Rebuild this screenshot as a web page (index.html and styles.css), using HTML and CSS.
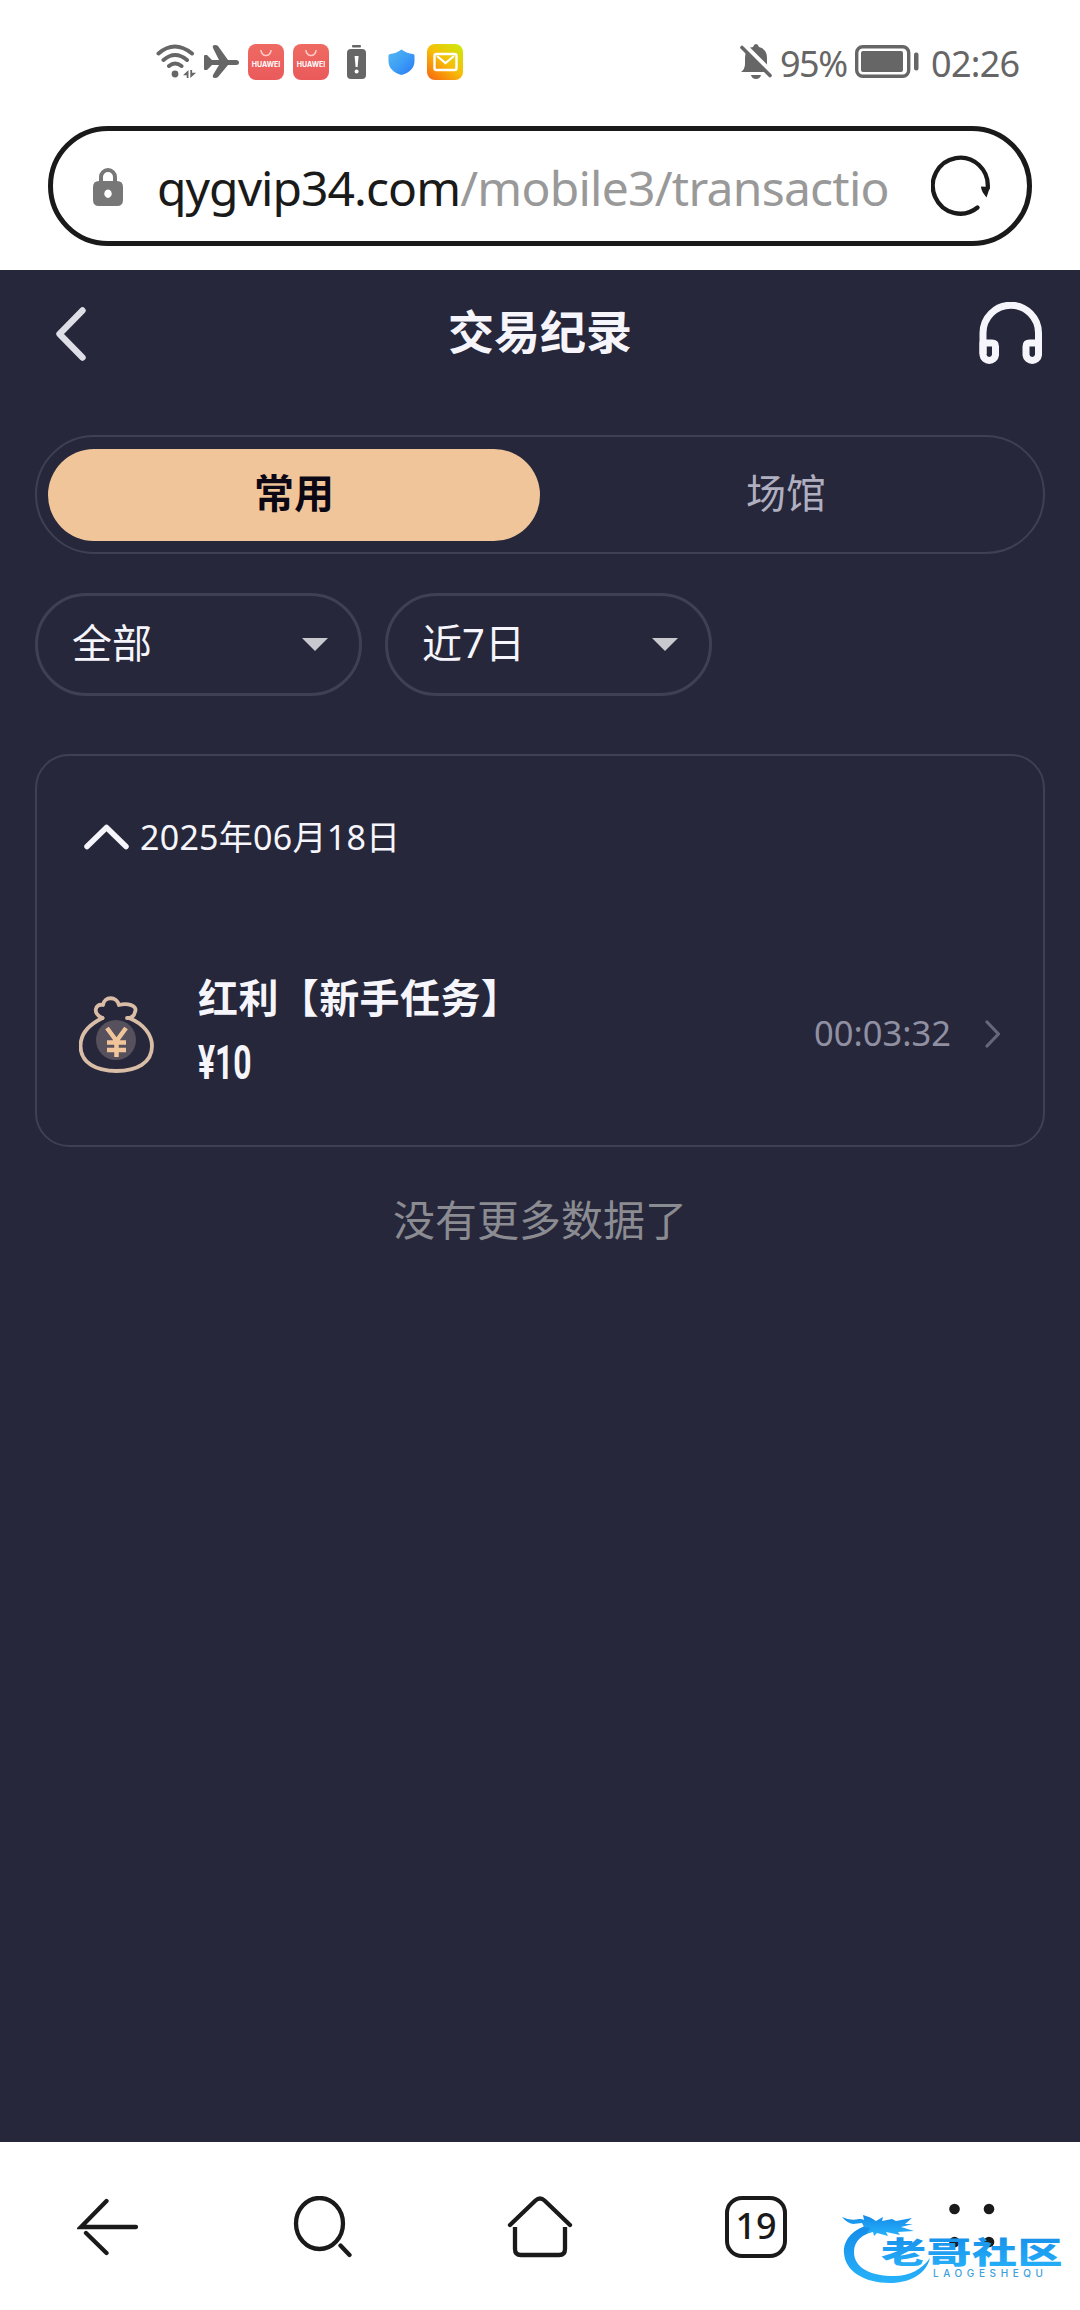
FILE: index.html
```html
<!DOCTYPE html>
<html lang="zh-CN">
<head>
<meta charset="utf-8">
<title>交易纪录</title>
<link rel="stylesheet" href="styles.css">
</head>
<body>
<div class="status">
  <div class="status-left">
    <svg class="wifi" width="41" height="36" viewBox="0 0 41 36" fill="none" stroke="#666" stroke-width="4" stroke-linecap="round"><path d="M2.500 9.500Q18.500 -4.500 36 9.500M7.500 16Q19 6 31 16M13 22Q19 17 25.500 22"/><circle cx="19" cy="30" r="3.400" fill="#666" stroke="none"/><path d="M32.500 26v8h-1.800v-2.800H27zM34.300 34v-8h1.800v2.800h4z" fill="#666" stroke="none"/></svg>
    <svg class="plane" width="35" height="36" viewBox="0 0 35 36" fill="#666"><path d="M1 11h2l5 5h7L9 4q-1-3 2-3 2 0 3 1l10 14h8q3 0 3 2.500T32 21h-8L14 33q-1 1-3 1-3 0-2-3l6-10H8l-5 5H1q-1 0-1-1V12q0-1 1-1z"/></svg>
    <div class="huawei"><svg width="12" height="7" viewBox="0 0 12 7" fill="none" stroke="#ffc9c5" stroke-width="1.500"><path d="M.8 0q1 5.500 5.200 5.500T11.200 0"/></svg><span>HUAWEI</span></div>
    <div class="huawei second"><svg width="12" height="7" viewBox="0 0 12 7" fill="none" stroke="#ffc9c5" stroke-width="1.500"><path d="M.8 0q1 5.500 5.200 5.500T11.200 0"/></svg><span>HUAWEI</span></div>
    <svg class="alert" width="19" height="36" viewBox="0 0 19 36"><rect x="5" y="1" width="9" height="2.600" rx="1" fill="#666"/><rect y="5" width="19" height="30" rx="4" fill="#666"/><path d="M7.600 12h4l-1 11H8.600z" fill="#fff"/><circle cx="9.600" cy="27.500" r="2" fill="#fff"/></svg>
    <svg class="shield" width="27" height="36" viewBox="0 0 27 36"><defs><linearGradient id="sh" x2="1" y2="1"><stop offset="0" stop-color="#55b7ee"/><stop offset=".5" stop-color="#3d9ef5"/><stop offset="1" stop-color="#2878f8"/></linearGradient></defs><path d="M13.500 5.500Q19 9.500 25 10q1.500 0 1.500 2v5q0 10-13 14Q.5 27 .5 17v-5q0-2 1.500-2 6-.5 11.500-4.500z" fill="url(#sh)"/></svg>
    <svg class="mail" width="36" height="36" viewBox="0 0 36 36"><defs><linearGradient id="ml" x1=".9" y1="0" x2=".1" y2="1"><stop offset="0" stop-color="#cee80c"/><stop offset=".5" stop-color="#f7bd08"/><stop offset="1" stop-color="#f76a10"/></linearGradient></defs><rect width="36" height="36" rx="8" fill="url(#ml)"/><rect x="7.500" y="10" width="22" height="16" rx="2" fill="none" stroke="#fff" stroke-width="2.400"/><path d="m10 12 8.500 7 8.500-7" fill="none" stroke="#fff" stroke-width="2.200"/></svg>
  </div>
  <div class="status-right">
    <svg class="bell" width="33" height="36" viewBox="0 0 33 36"><path d="M1 28q4-3 4-8v-6Q5 3 13 3q1-3 3-3t3 3q8 2 8 11v6q0 5 4 8z" fill="#666"/><path d="M11 31h10q-1 4-5 4t-5-4z" fill="#666"/><path d="m4 1 29 29" stroke="#fff" stroke-width="5"/><path d="m2 3.500 28 28" stroke="#666" stroke-width="3.600" stroke-linecap="round"/></svg>
    <span class="percent">95%</span>
    <svg class="battery" width="64" height="34" viewBox="0 0 64 34"><rect x="1.700" y="1.700" width="52" height="29.600" rx="6" fill="none" stroke="#666" stroke-width="3.400"/><rect x="6" y="6" width="42" height="21" rx="2" fill="#666"/><rect x="59" y="7.500" width="4.500" height="18" rx="2" fill="#666"/></svg>
    <span class="clock">02:26</span>
  </div>
</div>
<div class="address-wrap">
  <div class="address">
    <svg class="lock" width="30" height="39" viewBox="0 0 30 39"><path d="M8 17V10a7 7 0 0 1 14 0v7" fill="none" stroke="#777" stroke-width="4"/><path d="M6 14h18q6 0 6 6v13q0 6-6 6H6q-6 0-6-6V20q0-6 6-6zm9 8.500a3.700 4.200 0 1 0 .01 0z" fill="#777" fill-rule="evenodd"/></svg>
    <div class="url"><span class="host">qygvip34.com</span><span class="path">/mobile3/transactio</span></div>
    <svg class="reload" width="60" height="62" viewBox="0 0 60 62"><path d="M46.500 52.500A27.500 28 0 1 1 56.700 33" fill="none" stroke="#1a1a1a" stroke-width="4.300" stroke-linecap="round"/><path d="M50 31.500 59 32 55.500 42.500Q50 36 50 31.500z" fill="#1a1a1a"/></svg>
  </div>
</div>
<main>
  <header>
    <svg class="back" width="32" height="56" viewBox="0 0 32 56" fill="none" stroke="#dedfe6" stroke-width="6.400" stroke-linecap="round" stroke-linejoin="round"><path d="M27.500 4.500 4.500 28l23 23.500"/></svg>
    <h1>交易纪录</h1>
    <svg class="headset" width="64" height="64" viewBox="0 0 64 64" fill="none" stroke="#f5f5fb" stroke-width="7"><path d="M4 52V31a27.500 27.500 0 0 1 55.500 0v21"/><path d="M4 41h9q3.500 0 3.500 3.500V53A6.300 6.300 0 0 1 4 53zM59.500 41h-9q-3.500 0-3.500 3.500V53a6.300 6.300 0 0 0 12.500 0z" stroke-linejoin="round"/></svg>
  </header>
  <div class="tabs"><div class="tab active">常用</div><div class="tab">场馆</div></div>
  <div class="filters">
    <div class="filter"><span>全部</span><i></i></div>
    <div class="filter"><span>近7日</span><i></i></div>
  </div>
  <section class="card">
    <div class="date"><svg width="46" height="26" viewBox="0 0 46 26" fill="none" stroke="#f5f5fb" stroke-width="5.500" stroke-linecap="round" stroke-linejoin="round"><path d="M3 22.500 22.500 3.500l19.500 19"/></svg><span>2025年06月18日</span></div>
    <div class="record">
      <svg class="bag" width="76" height="78" viewBox="0 0 76 78"><circle cx="37" cy="44" r="20" fill="#57505d"/><g fill="none" stroke="#d9bda6" stroke-width="3.800" stroke-linejoin="round" stroke-linecap="round"><path d="M23.500 22C13 18 16 7 24 9c1-9 14-9 16 0 8-2 19 0 16 7-1 5-4 6-8 6"/><path d="M23.500 22C9 29 1.500 39 1.500 50c0 17 16 25 36 25S73 67 73 50c0-11-8-22-23-28"/></g><path d="m28 32 9.500 13L47 32M37.500 44v17M28 46.500h19M28 54h19" fill="none" stroke="#f1c59a" stroke-width="4.500"/></svg>
      <div class="detail"><div class="name">红利【新手任务】</div><div class="amount">¥10</div></div>
      <span class="time">00:03:32</span>
      <svg class="go" width="16" height="28" viewBox="0 0 16 28" fill="none" stroke="#66677b" stroke-width="3.200" stroke-linecap="round" stroke-linejoin="round"><path d="m2 2 11.500 12L2 26"/></svg>
    </div>
  </section>
  <p class="end">没有更多数据了</p>
</main>
<nav>
  <div><svg width="62" height="62" viewBox="0 0 62 62" fill="none" stroke="#1a1a1a" stroke-width="4.300" stroke-linecap="round"><path d="M29.500 5 4 31h55M29.500 57 9 37"/></svg></div>
  <div><svg width="62" height="62" viewBox="0 0 62 62" fill="none" stroke="#1a1a1a" stroke-width="4.300"><ellipse cx="26.500" cy="27.500" rx="23.500" ry="25.500"/><path d="m47.500 49.500 9 9.500" stroke-linecap="round"/></svg></div>
  <div><svg width="66" height="62" viewBox="0 0 66 62" fill="none" stroke="#1a1a1a" stroke-width="4.300" stroke-linecap="round"><path d="M3 29 28.500 4.500q4.500-4 9 0L63 29"/><path d="M8 31v22q0 6 6 6h38q6 0 6-6V31" stroke-linecap="butt"/></svg></div>
  <div><span class="count">19</span></div>
  <div><svg width="62" height="62" viewBox="0 0 62 62" fill="#1a1a1a"><circle cx="13.500" cy="13" r="5.300"/><circle cx="48" cy="13" r="5.300"/><circle cx="13.500" cy="46" r="5.300"/><circle cx="48" cy="46" r="5.300"/></svg></div>
  <svg class="brand" width="226" height="72" viewBox="0 0 226 72"><defs><linearGradient id="br" x2="0" y2="1"><stop offset="0" stop-color="#148ae8"/><stop offset="1" stop-color="#27b2fa"/></linearGradient></defs><g fill="url(#br)"><path d="M30 9C12 13 1 24 2 38c1 18 20 30 46 30 20 0 36-9 40-25-8 11-20 18-36 18-23 0-40-8-40-24C12 26 20 19 34 16z"/><path d="M0 2q8 4 17 2 3-.5 5 1l-1-5q8 2 13 6l7-4-1 4 10-2 4 2 16-3-7 6h8l-12 3 13 4-16 1 2 3-14-3 2 4-11-3-3 3-1-4-6 1 3-5-6-1-2-4-9 1Q5 8 0 2z"/><text class="brand-name" transform="translate(39 48) scale(1.5 1)" textLength="121" lengthAdjust="spacing">老哥社区</text></g><text class="brand-sub" x="91" y="62" textLength="110" lengthAdjust="spacing">LAOGESHEQU</text></svg>
</nav>
</body>
</html>
```
FILE: styles.css
```css
* { box-sizing: border-box; }
body { margin: 0; width: 1080px; height: 2310px; display: flex; flex-direction: column; background: #fff; font-family: "Noto Sans", "Noto Sans CJK SC", sans-serif; overflow: hidden; }
svg { display: block; flex: none; }

.status { height: 126px; padding: 44px 61px 0 156px; display: flex; justify-content: space-between; color: #666; }
.status-left, .status-right { display: flex; height: 36px; }
.plane { margin-left: 7px; }
.huawei { width: 36px; height: 36px; margin-left: 9px; padding-top: 6px; border-radius: 8px; background: linear-gradient(#ee6a62, #ea5a5c); display: flex; flex-direction: column; align-items: center; color: #fff; }
.huawei span { margin-top: 3px; font: 700 7px/10px Inter, sans-serif; }
.alert { margin-left: 18px; }
.shield { margin-left: 22px; }
.mail { margin-left: 12px; }
.status-right { align-items: center; }
.percent, .clock { font-size: 36px; line-height: 36px; white-space: nowrap; padding-top: 4px; }
.percent { width: 66px; margin-left: 7px; margin-right: 9px; letter-spacing: -1.500px; }
.clock { width: 88px; margin-left: 12px; letter-spacing: -.7px; }

.address-wrap { height: 144px; padding: 0 48px; }
.address { height: 120px; border: 5px solid #1a1a1a; border-radius: 60px; display: flex; align-items: center; padding: 0 36px 0 40px; }
.url { flex: 1; margin-left: 34px; padding-top: 4px; font-size: 48px; line-height: 64px; white-space: nowrap; }
.host { color: #1a1a1a; letter-spacing: -.95px; }
.path { color: #999; letter-spacing: -.75px; }

main { height: 1872px; background: #26273a; color: #f5f5fb; }
header { height: 165px; padding: 32px 37px 0 55px; display: flex; justify-content: space-between; align-items: flex-start; }
.back { margin-top: 4px; }
h1 { margin: -2px 0 0 14px; font-size: 46px; line-height: 62px; font-weight: 700; }
.tabs { height: 119px; margin: 0 35px; padding: 12px 11px; border: 2px solid #3f4054; border-radius: 60px; display: flex; }
.tab { flex: 1; border-radius: 46px; height: 92px; font-size: 40px; line-height: 88px; text-align: center; color: #b0afc0; }
.tab.active { background: #f1c59a; color: #0b0714; font-weight: 700; }
.filters { display: flex; gap: 23px; margin: 39px 35px 0; }
.filter { width: 327px; height: 103px; border: 3px solid #3f4054; border-radius: 52px; display: flex; align-items: center; justify-content: space-between; padding: 0 31px 0 34px; font-size: 40px; line-height: 60px; }
.filter span { margin-top: -4px; }
.filter i { border: 13px solid transparent; border-top-color: #c9c9d0; border-bottom: 0; }
.card { height: 393px; margin: 58px 35px 0; padding: 54px 42px 0 43px; border: 2px solid #3f4054; border-radius: 34px; }
.date { display: flex; align-items: center; height: 50px; padding-left: 4px; font-size: 34px; letter-spacing: .25px; }
.date svg { margin-top: 3px; margin-right: 10px; }
.record { display: flex; height: 134px; margin-top: 107px; align-items: center; }
.bag { margin-top: 2px; margin-left: -1px; }
.detail { margin-left: 43px; flex: 1; }
.name { font-size: 40px; line-height: 60px; font-weight: 700; letter-spacing: .4px; white-space: nowrap; margin-top: -3px; }
.amount { font: 700 49px/70px Roboto, sans-serif; transform: scaleX(.65); transform-origin: left; }
.time { font-size: 34.500px; color: #9090a2; margin-top: -3px; }
.go { margin-left: 34px; }
.end { margin: 43px 0 0; font-size: 42px; line-height: 60px; text-align: center; color: #8b8b92; }

nav { position: relative; height: 168px; display: grid; grid-template-columns: repeat(5, 216px); padding-top: 54px; justify-items: center; }
.count { display: block; width: 62px; height: 62px; border: 4.500px solid #1a1a1a; border-radius: 17px; font-size: 36px; line-height: 52px; text-align: center; font-weight: 500; color: #1a1a1a; }
.brand { position: absolute; left: 842px; top: 73px; }
.brand-name { font: 900 30px "Noto Sans CJK SC", sans-serif; }
.brand-sub { font: 500 10px Inter, sans-serif; fill: #3c9edb; }
```
